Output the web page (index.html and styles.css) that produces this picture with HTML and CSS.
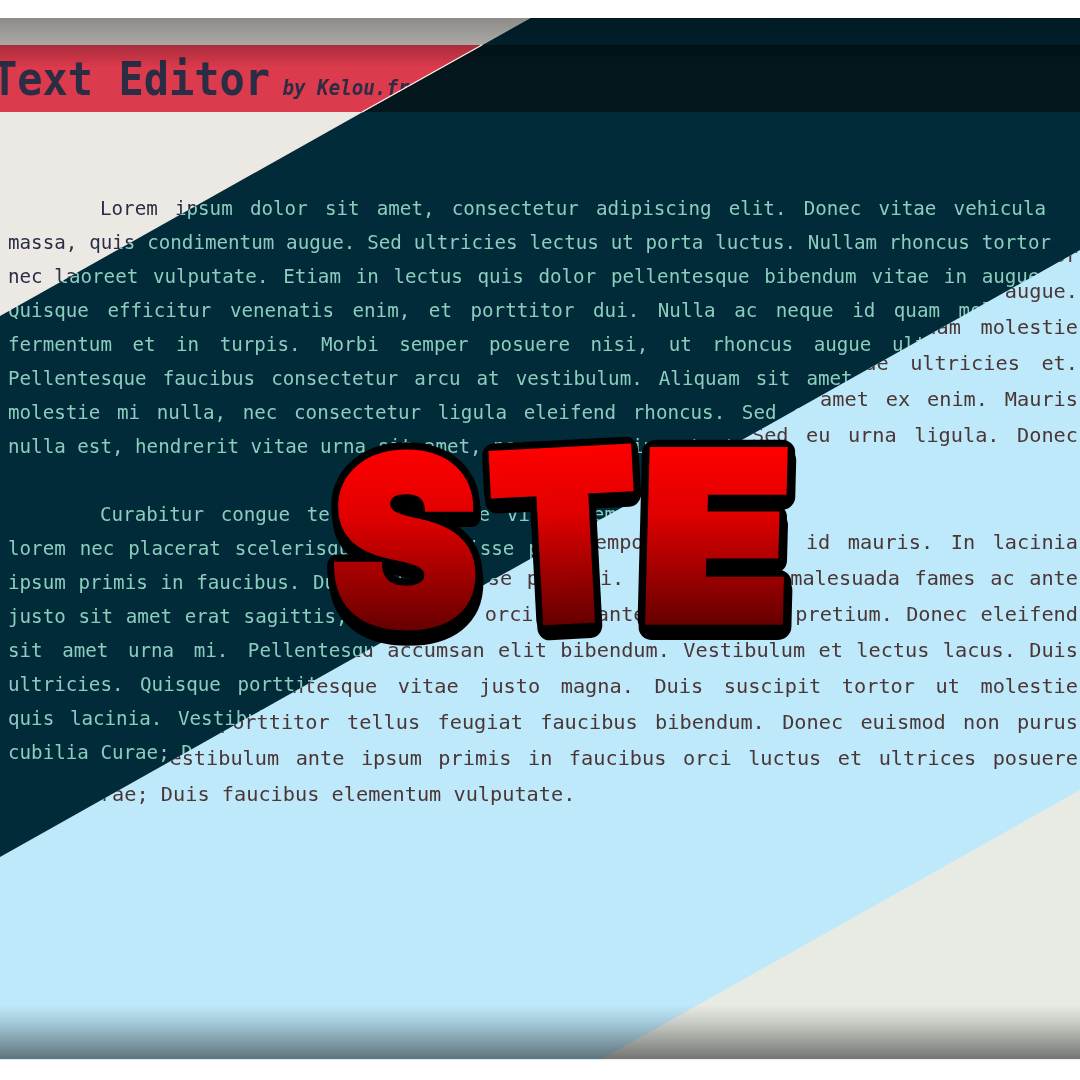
FILE: index.html
```html
<!DOCTYPE html>
<html lang="en">
<head>
<meta charset="utf-8">
<title>Simple Text Editor</title>
<link rel="stylesheet" href="styles.css">
</head>
<body>
<div class="stage">
  <section class="layer layer-dark">
    <div class="band"></div>
    <main class="doc">
      <p>Lorem ipsum dolor sit amet, consectetur adipiscing elit. Donec vitae vehicula<span class="tail"></span> massa, quis condimentum augue. Sed ultricies lectus ut porta luctus. Nullam rhoncus tortor nec laoreet vulputate. Etiam in lectus quis dolor pellentesque bibendum vitae in augue. Quisque efficitur venenatis enim, et porttitor dui. Nulla ac neque id quam molestie fermentum et in turpis. Morbi semper posuere nisi, ut rhoncus augue ultricies et. Pellentesque faucibus consectetur arcu at vestibulum. Aliquam sit amet ex enim. Mauris molestie mi nulla, nec consectetur ligula eleifend rhoncus. Sed eu urna ligula. Donec nulla est, hendrerit vitae urna sit amet, posuere pulvinar tortor.</p>
      <p>Curabitur congue tellus non ante vitae tempor, sit amet id mauris. In lacinia lorem nec placerat scelerisque. Suspendisse potenti. Interdum et malesuada fames ac ante ipsum primis in faucibus. Duis vulputate orci sed ante vitae nisl pretium. Donec eleifend justo sit amet erat sagittis, id accumsan elit bibendum. Vestibulum et lectus lacus. Duis sit amet urna mi. Pellentesque vitae justo magna. Duis suscipit tortor ut molestie ultricies. Quisque porttitor tellus feugiat faucibus bibendum. Donec euismod non purus quis lacinia. Vestibulum ante ipsum primis in faucibus orci luctus et ultrices posuere cubilia Curae; Duis faucibus elementum vulputate.</p>
    </main>
  </section>

  <section class="layer layer-cream">
    <header class="band">
      <h1 class="title">Text Editor <small class="byline">by Kelou.fr</small></h1>
    </header>
    <main class="doc">
      <p>Lorem ipsum dolor sit amet, consectetur adipiscing elit. Donec vitae vehicula<span class="tail"></span> massa, quis condimentum augue. Sed ultricies lectus ut porta luctus. Nullam rhoncus tortor nec laoreet vulputate. Etiam in lectus quis dolor pellentesque bibendum vitae in augue.</p>
    </main>
  </section>

  <section class="layer layer-blue">
    <main class="doc">
      <p>Lorem ipsum dolor sit amet, consectetur adipiscing elit. Donec vitae vehicula massa, quis condimentum augue. Sed ultricies lectus ut porta luctus. Nullam rhoncus tortor nec laoreet vulputate. Etiam in lectus quis dolor pellentesque bibendum vitae in augue. Quisque efficitur venenatis enim, et porttitor dui. Nulla ac neque id quam molestie fermentum et in turpis. Morbi semper posuere nisi, ut rhoncus augue ultricies et. Pellentesque faucibus consectetur arcu at vestibulum. Aliquam sit amet ex enim. Mauris molestie mi nulla, nec consectetur ligula eleifend rhoncus. Sed eu urna ligula. Donec nulla est, hendrerit vitae urna sit amet, posuere pulvinar tortor.</p>
      <p>Curabitur congue tellus non ante vitae tempor, sit amet id mauris. In lacinia lorem nec placerat scelerisque. Suspendisse potenti. Interdum et malesuada fames ac ante ipsum primis in faucibus. Duis vulputate orci sed ante vitae nisl pretium. Donec eleifend justo sit amet erat sagittis, id accumsan elit bibendum. Vestibulum et lectus lacus. Duis sit amet urna mi. Pellentesque vitae justo magna. Duis suscipit tortor ut molestie ultricies. Quisque porttitor tellus feugiat faucibus bibendum. Donec euismod non purus quis lacinia. Vestibulum ante ipsum primis in faucibus orci luctus et ultrices posuere cubilia Curae; Duis faucibus elementum vulputate.</p>
    </main>
  </section>

  <section class="layer layer-sand"></section>

  <div class="shade shade-top"></div>
  <div class="shade shade-bottom"></div>

  <svg class="seam" viewBox="0 0 1080 1042" aria-hidden="true">
    <line class="seam-soft" x1="530" y1="0" x2="482" y2="27"></line>
    <line class="seam-hard" x1="482" y1="27" x2="362" y2="94"></line>
  </svg>

  <svg class="logo" viewBox="0 0 1080 1042" role="img" aria-label="STE">
    <defs>
      <linearGradient id="ste-fill" x1="0" y1="0" x2="0" y2="1">
        <stop offset="0.17" stop-color="#ff0000"></stop>
        <stop offset="0.42" stop-color="#e00000"></stop>
        <stop offset="0.82" stop-color="#660000"></stop>
      </linearGradient>
    </defs>
    <g class="logo-back">
      <text class="letter-s" transform="translate(331 607) scale(0.93 0.98)">S</text>
      <text transform="translate(497 604) rotate(-3) scale(0.88 0.955)">T</text>
      <text transform="translate(640 601) skewX(-1.5) scale(1.01 0.96)">E</text>
    </g>
    <g class="logo-face">
      <text class="letter-s" transform="translate(331 607) scale(0.93 0.98)">S</text>
      <text transform="translate(497 604) rotate(-3) scale(0.88 0.955)">T</text>
      <text transform="translate(640 601) skewX(-1.5) scale(1.01 0.96)">E</text>
    </g>
  </svg>
</div>
</body>
</html>
```
FILE: styles.css
```css
* { box-sizing: border-box; }

html, body {
  margin: 0;
  background: #fff;
}

.stage {
  position: relative;
  width: 1080px;
  height: 1042px;
  margin-top: 18px;
  overflow: hidden;
}

.layer {
  position: absolute;
  inset: 0;
  overflow: hidden;
}

.layer-dark {
  background: #022b3a;
  color: #8ccdbe;
}
.layer-dark .band { background: #03171d; }

.layer-cream {
  background: #ece9e4;
  color: #2b2d45;
  clip-path: polygon(0 0, 530px 0, 0 298px);
}
.layer-cream .band { background: #dc3a4d; }

.layer-blue {
  background: #bee9fa;
  color: #4b3636;
  clip-path: polygon(1080px 232px, 0 839px, 0 1042px, 1080px 1042px);
}

.layer-sand {
  background: #e8ebe4;
  clip-path: polygon(1080px 772px, 600px 1042px, 1080px 1042px);
}

.band {
  height: 67px;
  margin-top: 27px;
  overflow: hidden;
}

.title {
  margin: 0 0 0 -8px;
  font: 700 42px/62px "DejaVu Sans Mono", monospace;
  white-space: nowrap;
  transform: scaleY(1.1);
  transform-origin: 0 0;
  filter: blur(.3px);
}

.byline {
  margin-left: -13px;
  font: italic 700 19.2px "DejaVu Sans Mono", monospace;
}

.doc {
  width: 1043px;
  margin: 80px 0 0 8px;
  font: 19.2px/34px "DejaVu Sans Mono", monospace;
  filter: blur(.2px);
}

.doc p {
  margin: 0 0 34px;
  text-align: justify;
  text-indent: 92px;
}

.tail {
  display: inline-block;
  width: 5px;
}

.layer-blue .doc {
  width: 1100px;
  margin: 183px 0 0 -22px;
  font-size: 20.25px;
  line-height: 36px;
}

.layer-blue .doc p {
  margin-bottom: 35px;
  text-indent: 97px;
}

.shade {
  position: absolute;
  left: 0;
  right: 0;
  pointer-events: none;
}

.shade-top {
  top: 0;
  height: 50px;
  background: linear-gradient(rgba(0,0,0,.4), rgba(0,0,0,.28) 54%, rgba(0,0,0,.22) 56%, rgba(0,0,0,0));
}

.shade-bottom {
  bottom: 0;
  height: 55px;
  border-bottom: 1px solid rgba(255,255,255,.3);
  background: linear-gradient(rgba(0,0,0,0), rgba(0,0,0,.12) 30%, rgba(0,0,0,.5));
}

.seam, .logo {
  position: absolute;
  inset: 0;
  width: 1080px;
  height: 1042px;
  pointer-events: none;
}

.seam-soft {
  stroke: rgba(255,255,255,.35);
  stroke-width: 1;
}

.seam-hard {
  stroke: #f5f3f0;
  stroke-width: 1.2;
}

.logo {
  filter: drop-shadow(1px 8px 0 #000);
}

.logo-back, .logo-face {
  font: 900 238px Inter, Roboto, "Liberation Sans", sans-serif;
}

.logo-back {
  fill: #000;
  stroke: #000;
  stroke-width: 27px;
  stroke-linejoin: round;
}

.logo-back .letter-s { stroke-width: 22px; }

.logo-face {
  fill: url(#ste-fill);
  stroke: url(#ste-fill);
  stroke-width: 12px;
  stroke-linejoin: miter;
}

.logo-face .letter-s { stroke-width: 7px; }
```
